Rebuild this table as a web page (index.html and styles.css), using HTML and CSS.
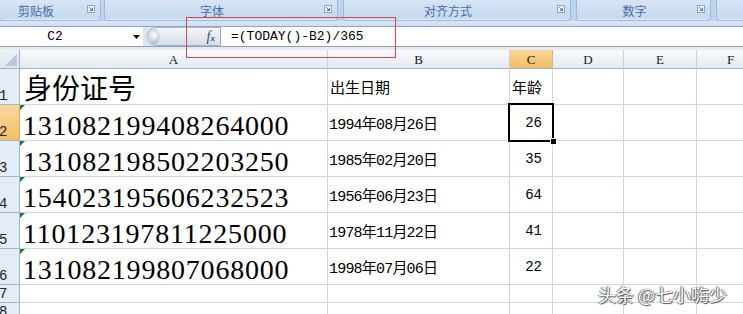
FILE: index.html
```html
<!DOCTYPE html>
<html lang="zh-CN">
<head>
<meta charset="utf-8">
<title>年龄计算</title>
<link rel="stylesheet" href="styles.css">
</head>
<body>
<div class="ribbon">
  <div class="groups">
    <div class="group g1"><span class="glabel">剪贴板</span><svg class="launcher" width="8" height="8" viewBox="0 0 8 8"><rect x=".5" y=".5" width="7" height="7" fill="#eef3f9" stroke="#8fa6c3"/><path d="M2.2 2.2 L5.3 5.3 M3 5.5 H5.5 V3" stroke="#5a7396" fill="none"/></svg></div>
    <div class="group g2"><span class="glabel">字体</span><svg class="launcher" width="8" height="8" viewBox="0 0 8 8"><rect x=".5" y=".5" width="7" height="7" fill="#eef3f9" stroke="#8fa6c3"/><path d="M2.2 2.2 L5.3 5.3 M3 5.5 H5.5 V3" stroke="#5a7396" fill="none"/></svg></div>
    <div class="group g3"><span class="glabel">对齐方式</span><svg class="launcher" width="8" height="8" viewBox="0 0 8 8"><rect x=".5" y=".5" width="7" height="7" fill="#eef3f9" stroke="#8fa6c3"/><path d="M2.2 2.2 L5.3 5.3 M3 5.5 H5.5 V3" stroke="#5a7396" fill="none"/></svg></div>
    <div class="group g4"><span class="glabel">数字</span><svg class="launcher" width="8" height="8" viewBox="0 0 8 8"><rect x=".5" y=".5" width="7" height="7" fill="#eef3f9" stroke="#8fa6c3"/><path d="M2.2 2.2 L5.3 5.3 M3 5.5 H5.5 V3" stroke="#5a7396" fill="none"/></svg></div>
    <div class="group g5"></div>
  </div>
</div>

<div class="fbar">
  <div class="namebox"><span class="cellref">C2</span><svg class="drop" width="7" height="4" viewBox="0 0 7 4"><path d="M0 0 H7 L3.5 4 Z" fill="#000"/></svg></div>
  <div class="pill"><span class="knob"></span><span class="fx"><i>f</i><i class="sx">x</i></span></div>
  <div class="formula">=(TODAY()-B2)/365</div>
</div>
<div class="band"></div>

<div class="sheet">
  <div class="corner"></div>
  <div class="ch">A</div><div class="ch">B</div><div class="ch sel">C</div><div class="ch">D</div><div class="ch">E</div><div class="ch">F</div><div class="ch"></div>

  <div class="rh">1</div>
  <div class="c big title">身份证号</div><div class="c sm">出生日期</div><div class="c sm">年龄</div><div class="c"></div><div class="c"></div><div class="c"></div><div class="c"></div>

  <div class="rh sel">2</div>
  <div class="c big tri">131082199408264000</div><div class="c sm date">1994年08月26日</div><div class="c num active">26</div><div class="c"></div><div class="c"></div><div class="c"></div><div class="c"></div>

  <div class="rh">3</div>
  <div class="c big tri">131082198502203250</div><div class="c sm date">1985年02月20日</div><div class="c num">35</div><div class="c"></div><div class="c"></div><div class="c"></div><div class="c"></div>

  <div class="rh">4</div>
  <div class="c big tri">154023195606232523</div><div class="c sm date">1956年06月23日</div><div class="c num">64</div><div class="c"></div><div class="c"></div><div class="c"></div><div class="c"></div>

  <div class="rh">5</div>
  <div class="c big tri">110123197811225000</div><div class="c sm date">1978年11月22日</div><div class="c num">41</div><div class="c"></div><div class="c"></div><div class="c"></div><div class="c"></div>

  <div class="rh">6</div>
  <div class="c big tri">131082199807068000</div><div class="c sm date">1998年07月06日</div><div class="c num">22</div><div class="c"></div><div class="c"></div><div class="c"></div><div class="c"></div>

  <div class="rh">7</div>
  <div class="c"></div><div class="c"></div><div class="c"></div><div class="c"></div><div class="c"></div><div class="c"></div><div class="c"></div>

  <div class="rh">8</div>
  <div class="c"></div><div class="c"></div><div class="c"></div><div class="c"></div><div class="c"></div><div class="c"></div><div class="c"></div>
</div>

<div class="annot"></div>
<div class="watermark">头条 @七小嗨少</div>
</body>
</html>
```

FILE: styles.css
```css
html, body {
  margin: 0;
  padding: 0;
  width: 743px;
  height: 314px;
  overflow: hidden;
  background: #fff;
}
body {
  position: relative;
  font-family: "Liberation Sans", "Noto Sans CJK SC", sans-serif;
  color: #000;
}

/* ribbon */
.ribbon {
  height: 26px;
  background: linear-gradient(#bfd3ec 0, #bfd3ec 21px, #d9e6f5 21px, #cfdef1 26px);
}
.groups {
  display: flex;
  height: 21px;
  overflow: hidden;
}
.group {
  position: relative;
  display: flex;
  align-items: flex-start;
  flex: none;
  height: 21px;
  box-sizing: border-box;
  margin-left: 5px;
  background: linear-gradient(#d7e5f6, #c4d8f0);
  border: 1px solid #9fb9dc;
  border-top: none;
  border-radius: 0 0 4px 4px;
  box-shadow: inset 0 -1px 0 #e3edf9;
}
.g1 { width: 102px; margin-left: -1px; }
.g2 { width: 234px; margin-left: 3px; }
.g3 { width: 228px; }
.g4 { width: 135px; }
.g5 { width: 60px; }
.glabel {
  flex: 1;
  text-align: center;
  padding-right: 5px;
  padding-top: 3px;
  font-family: "Noto Sans CJK SC", sans-serif;
  font-size: 12px;
  line-height: 15px;
  color: #4a6ca3;
}
.g1 .glabel { padding-right: 15px; }
.launcher {
  flex: none;
  margin: 5px 5px 0 0;
}

/* formula bar */
.fbar {
  display: flex;
  height: 21px;
  box-sizing: border-box;
  border-top: 1px solid #8da6c6;
  border-bottom: 1px solid #8ea0b8;
  background: #dbe5f1;
}
.namebox {
  display: flex;
  align-items: center;
  width: 143px;
  background: #fff;
}
.cellref {
  width: 110px;
  text-align: center;
  font-family: "Liberation Mono", monospace;
  font-size: 13px;
}
.drop { margin-left: 23px; }
.pill {
  display: flex;
  align-items: center;
  justify-content: space-between;
  width: 74px;
  margin-left: 4px;
  box-sizing: border-box;
  border: 1px solid #aab7c8;
  border-right: 1px solid #9aabc0;
  border-radius: 10px 0 0 10px;
  background: linear-gradient(#f4f6fa, #d6dee9);
}
.knob {
  width: 11px;
  height: 15px;
  margin-left: 1px;
  border-radius: 50%;
  background: radial-gradient(circle at 45% 40%, #ffffff 0, #dfe5ec 35%, #aeb9c8 80%);
}
.fx {
  margin-right: 5px;
  font-family: "Liberation Serif", serif;
  font-size: 14px;
  color: #3d4a5c;
}
.fx .sx { font-size: 9px; font-weight: bold; }
.formula {
  flex: 1;
  display: flex;
  align-items: center;
  padding-left: 10px;
  background: #fff;
  font-family: "Liberation Mono", monospace;
  font-size: 13px;
}
.band {
  height: 3px;
  background: #e6ebf2;
}

/* sheet */
.sheet {
  display: grid;
  grid-template-columns: 20px 308px 182px 43px 71px 73px 68px 60px;
  grid-template-rows: 19px repeat(6, 36px) 18px 18px;
  width: 825px;
}
.sheet > div {
  box-sizing: border-box;
  border-right: 1px solid #d0d7e5;
  border-bottom: 1px solid #d0d7e5;
}
.corner {
  position: relative;
  background: linear-gradient(#eef2f7, #dde5ef);
  border-right-color: #9eb6ce !important;
  border-bottom-color: #9eb6ce !important;
}
.corner::after {
  content: "";
  position: absolute;
  right: 2px;
  bottom: 2px;
  border-left: 12px solid transparent;
  border-bottom: 12px solid #b9c8da;
}
.ch {
  display: flex;
  align-items: center;
  justify-content: center;
  padding-top: 1px;
  background: linear-gradient(#f9fafc, #e4eaf3);
  border-right-color: #c5d1e1 !important;
  border-bottom-color: #9eb6ce !important;
  font-family: "Liberation Serif", serif;
  font-size: 13px;
  color: #222;
}
.ch.sel {
  background: linear-gradient(#f9d79c, #f1bc62);
  border-right-color: #f0b35a !important;
}
.rh {
  display: flex;
  align-items: flex-end;
  overflow: hidden;
  background: #e4ecf7;
  border-right-color: #9eb6ce !important;
  border-bottom-color: #9eb6ce !important;
  font-family: "Liberation Mono", monospace;
  font-size: 14px;
  line-height: 14px;
  color: #222;
  text-indent: -1px;
  padding-bottom: 1px;
}
.rh.sel {
  background: linear-gradient(#f9d89e, #f2c068);
  border-right-color: #e8a84c !important;
}
.c {
  position: relative;
  display: flex;
  align-items: center;
  white-space: nowrap;
}
.big {
  align-items: flex-end;
  padding-left: 3px;
  font-family: "Liberation Serif", "Noto Sans CJK SC", serif;
  font-size: 28px;
  line-height: 28px;
  letter-spacing: 0.8px;
}
.big.title { letter-spacing: 0; padding-left: 4px; }
.sm {
  padding-left: 2px;
  padding-top: 1px;
  font-family: "Liberation Mono", "Noto Sans CJK SC", monospace;
  font-size: 15px;
}
.sm.date { letter-spacing: -0.8px; padding-left: 1px; }
.num {
  justify-content: flex-end;
  padding-right: 10px;
  padding-top: 1px;
  font-family: "Liberation Mono", monospace;
  font-size: 14px;
}
.tri::before {
  content: "";
  position: absolute;
  left: 0;
  top: 0;
  border-top: 5px solid #1f7a2e;
  border-right: 5px solid transparent;
}
.active::after {
  content: "";
  position: absolute;
  left: -2px;
  top: -2px;
  right: -2px;
  bottom: -2px;
  border: 2px solid #000;
  z-index: 2;
}
.active::before {
  content: "";
  position: absolute;
  right: -5px;
  bottom: -5px;
  width: 5px;
  height: 5px;
  background: #000;
  border: 1px solid #fff;
  z-index: 3;
}

/* overlays */
.annot {
  position: absolute;
  left: 186px;
  top: 17px;
  width: 210px;
  height: 41px;
  box-sizing: border-box;
  border: 1px solid #e0434b;
}
.watermark {
  position: absolute;
  left: 598px;
  top: 284px;
  font-family: "Noto Sans CJK SC", sans-serif;
  font-size: 18px;
  line-height: 20px;
  color: #fff;
  text-shadow: 0 0 1px #444, 1px 1px 1px #555, -1px 0 1px #777;
}
```
